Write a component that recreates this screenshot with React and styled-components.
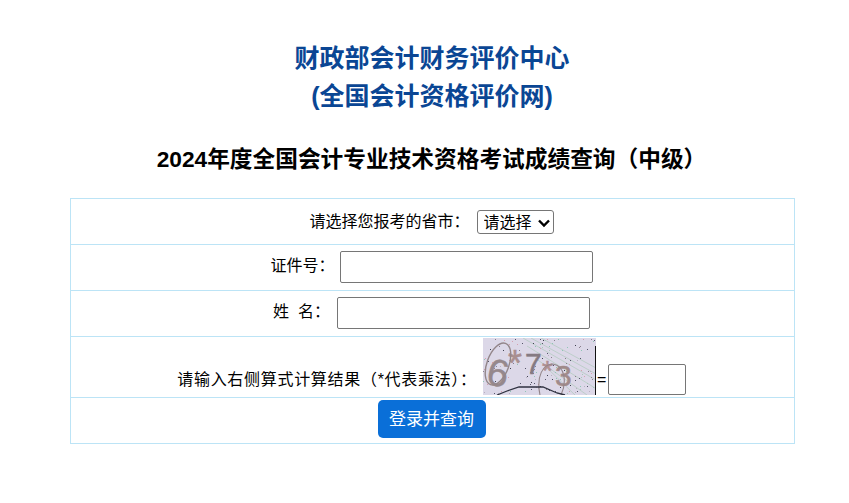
import React from "react";
import styled, { createGlobalStyle } from "styled-components";

const GlobalStyle = createGlobalStyle`
  html, body {
    margin: 0;
    padding: 0;
    background: #fff;
    font-family: "Liberation Sans", "Noto Sans CJK SC", sans-serif;
    color: #000;
  }
`;

const Page = styled.div`
  width: 849px;
  height: 503px;
  overflow: hidden;
  padding-top: 39px;
  box-sizing: border-box;
`;

const SiteTitle = styled.h1`
  margin: 0;
  padding-left: 15px;
  text-align: center;
  font-size: 25px;
  line-height: 38px;
  font-weight: 700;
  color: #0a4694;
`;

const ExamTitle = styled.h2`
  margin: 27px 0 22px;
  padding-left: 14px;
  text-align: center;
  font-size: 22.7px;
  line-height: 34px;
  font-weight: 700;
`;

const FormTable = styled.table`
  width: 725px;
  margin-left: 70px;
  border-collapse: collapse;
  table-layout: fixed;
`;

const Row = styled.tr`
  height: ${(props) => props.$height || 46}px;
`;

const Cell = styled.td`
  border: 1px solid #bce4f6;
  padding: 0 2px 1px 0;
  text-align: center;
  font-size: 16px;
`;

const Label = styled.span`
  display: inline-block;
  margin-right: ${(props) => props.$gap || 7}px;
`;

const chevron =
  "data:image/svg+xml;utf8,<svg xmlns='http://www.w3.org/2000/svg' width='14' height='10' viewBox='0 0 14 10'><path d='M2 2.5 L7 7.5 L12 2.5' fill='none' stroke='black' stroke-width='2.4'/></svg>";

const ProvinceSelect = styled.select`
  appearance: none;
  box-sizing: border-box;
  width: 77px;
  height: 24px;
  font-family: inherit;
  font-size: 16px;
  padding: 0 0 0 6px;
  vertical-align: middle;
  background: #fff url("${chevron}") no-repeat 59px 7px;
  color: #000;
  border: 1px solid #767676;
  border-radius: 3px;
`;

const TextInput = styled.input`
  box-sizing: border-box;
  flex: none;
  width: ${(props) => props.$width || 253}px;
  height: ${(props) => props.$tall || 32}px;
  padding: 1px 2px;
  border: 1px solid #767676;
  border-radius: 2px;
  vertical-align: middle;
  background: #fff;
`;

const CaptchaRow = styled.div`
  display: flex;
  align-items: flex-end;
  justify-content: center;
  height: 57px;
  margin: 1px 0;
`;

const CaptchaLabel = styled.span`
  margin: 0 6px 3px 0;
  line-height: 24px;
  letter-spacing: 0.7px;
  white-space: nowrap;
`;

const Equals = styled.span`
  width: 12px;
  line-height: 16px;
  margin-bottom: 7px;
`;

const SubmitButton = styled.button`
  display: block;
  width: 108px;
  height: 38px;
  margin: 0 auto;
  transform: translate(0, -1px);
  border: none;
  border-radius: 5px;
  background: #0a6fd8;
  color: #fff;
  font-family: inherit;
  font-size: 17px;
  padding: 0 0 3px;
`;

// small seeded generator so the captcha noise is stable between runs
function makeNoise(count) {
  let seed = 73;
  const next = () => {
    seed = (seed * 16807) % 2147483647;
    return seed / 2147483647;
  };
  const colors = ["#55556a", "#8a7f8c", "#3f4150", "#a9c7b9", "#d59fb0", "#8fc5b5", "#b8b0c0"];
  return Array.from({ length: count }, () => ({
    x: Math.floor(next() * 112),
    y: Math.floor(next() * 56),
    fill: colors[Math.floor(next() * colors.length)],
  }));
}

const noise = makeNoise(150);

function Captcha() {
  return (
    <svg width="113" height="57" viewBox="0 0 113 57" style={{ display: "block", flex: "none" }}>
      <rect width="113" height="57" fill="#dcd8e8" />
      <g stroke="#b5ccc2" strokeWidth="0.8">
        <line x1="40" y1="0" x2="113" y2="42" />
        <line x1="48" y1="0" x2="113" y2="36" />
        <line x1="58" y1="0" x2="113" y2="30" />
        <line x1="44" y1="8" x2="112" y2="50" />
        <line x1="52" y1="20" x2="104" y2="57" />
        <line x1="62" y1="28" x2="92" y2="57" />
      </g>
      {noise.map((dot, i) => (
        <rect key={i} x={dot.x} y={dot.y} width="1" height="1" fill={dot.fill} />
      ))}
      <g fontFamily="Liberation Sans, sans-serif" stroke="currentColor" strokeWidth="0.5">
        <text x="5" y="48" fontSize="38" fill="#96888c" color="#96888c" transform="rotate(12 15 32)">6</text>
        <text x="25" y="38" fontSize="36" fill="#a98f90" color="#a98f90">*</text>
        <text x="42" y="36" fontSize="30" fill="#857a82" color="#857a82">7</text>
        <text x="59" y="42" fontSize="28" fill="#b09092" color="#b09092">*</text>
        <text x="72" y="48" fontSize="30" fill="#a08a8a" color="#a08a8a">3</text>
      </g>
      <ellipse cx="15" cy="26" rx="11" ry="22" transform="rotate(20 15 26)" fill="none" stroke="#93868a" strokeWidth="1.4" />
      <path d="M57 57 C53 38 60 26 70 26 C82 28 84 44 78 57" fill="none" stroke="#93868a" strokeWidth="1.1" />
      <path d="M14 57 L24 53 L36 49 L52 49 L60 49 L74 55 L82 57" fill="none" stroke="#2f3140" strokeWidth="1.3" />
      <rect x="112" y="8" width="1" height="49" fill="#111" />
    </svg>
  );
}

export default function App() {
  return (
    <Page>
      <GlobalStyle />
      <SiteTitle>财政部会计财务评价中心</SiteTitle>
      <SiteTitle>(全国会计资格评价网)</SiteTitle>
      <ExamTitle>2024年度全国会计专业技术资格考试成绩查询（中级）</ExamTitle>
      <FormTable>
        <tbody>
          <Row>
            <Cell>
              <Label>请选择您报考的省市：</Label>
              <ProvinceSelect defaultValue="">
                <option value="">请选择</option>
              </ProvinceSelect>
            </Cell>
          </Row>
          <Row>
            <Cell>
              <Label $gap={5}>证件号：</Label>
              <TextInput type="text" />
            </Cell>
          </Row>
          <Row>
            <Cell>
              <Label>姓&nbsp;&nbsp;名：</Label>
              <TextInput type="text" />
            </Cell>
          </Row>
          <Row $height={61}>
            <Cell>
              <CaptchaRow>
                <CaptchaLabel>请输入右侧算式计算结果（*代表乘法）：</CaptchaLabel>
                <Captcha />
                <Equals>=</Equals>
                <TextInput type="text" $width={78} $tall={31} />
              </CaptchaRow>
            </Cell>
          </Row>
          <Row>
            <Cell>
              <SubmitButton type="button">登录并查询</SubmitButton>
            </Cell>
          </Row>
        </tbody>
      </FormTable>
    </Page>
  );
}
